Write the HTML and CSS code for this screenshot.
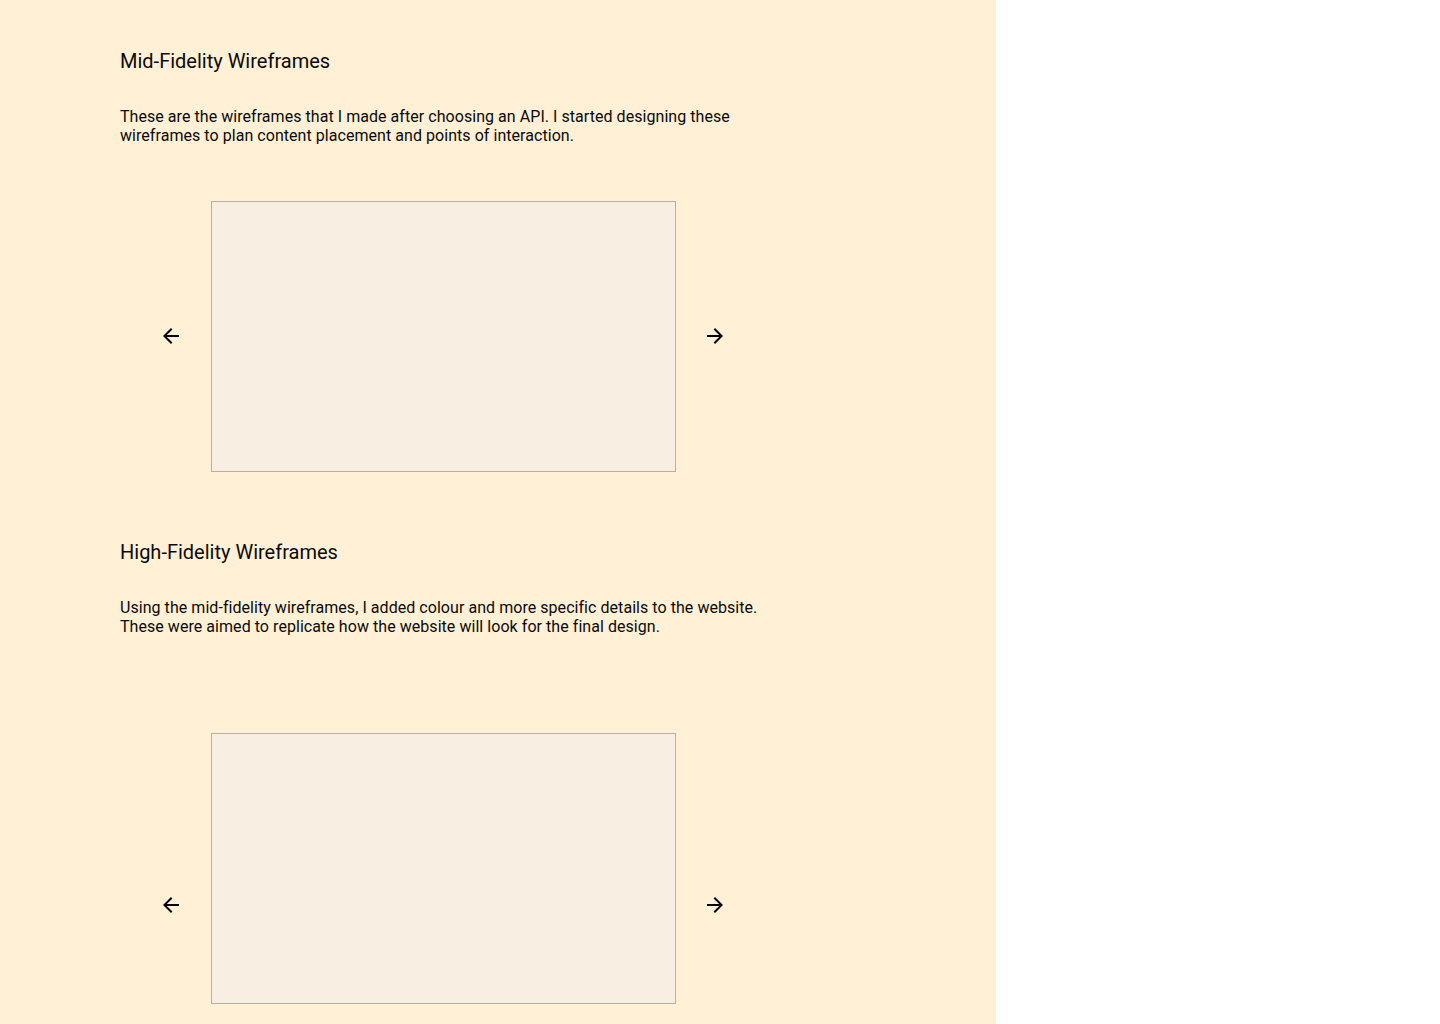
FILE: index.html
```html
<!DOCTYPE html>
<html lang="en">
<head>
<meta charset="utf-8">
<title>Wireframes</title>
<link rel="stylesheet" href="styles.css">
</head>
<body>
<main class="panel">
  <section class="section">
    <h2 class="title">Mid-Fidelity Wireframes</h2>
    <p class="text">These are the wireframes that I made after choosing an API. I started designing these<br>wireframes to plan content placement and points of interaction.</p>
    <div class="carousel carousel-mid">
      <button class="arrow" aria-label="Previous"><svg viewBox="0 0 24 24" width="24" height="24"><path d="M20 11H7.83l5.59-5.59L12 4l-8 8 8 8 1.41-1.41L7.83 13H20v-2z"/></svg></button>
      <div class="frame"></div>
      <button class="arrow" aria-label="Next"><svg viewBox="0 0 24 24" width="24" height="24"><path d="M4 11h12.17l-5.59-5.59L12 4l8 8-8 8-1.41-1.41L16.17 13H4v-2z"/></svg></button>
    </div>
  </section>
  <section class="section section-high">
    <h2 class="title">High-Fidelity Wireframes</h2>
    <p class="text">Using the mid-fidelity wireframes, I added colour and more specific details to the website.<br>These were aimed to replicate how the website will look for the final design.</p>
    <div class="carousel carousel-high">
      <button class="arrow" aria-label="Previous"><svg viewBox="0 0 24 24" width="24" height="24"><path d="M20 11H7.83l5.59-5.59L12 4l-8 8 8 8 1.41-1.41L7.83 13H20v-2z"/></svg></button>
      <div class="frame"></div>
      <button class="arrow" aria-label="Next"><svg viewBox="0 0 24 24" width="24" height="24"><path d="M4 11h12.17l-5.59-5.59L12 4l8 8-8 8-1.41-1.41L16.17 13H4v-2z"/></svg></button>
    </div>
  </section>
</main>
</body>
</html>
```
FILE: styles.css
```css
* { box-sizing: border-box; }
html, body { margin: 0; padding: 0; background: #ffffff; }
body { font-family: Roboto, "Liberation Sans", sans-serif; color: #0a0a0a; }
.panel {
  width: 996px;
  min-height: 1024px;
  background: #fff0d6;
  padding: 49px 0 0 120px;
}
.section { display: flex; flex-direction: column; }
.section-high { margin-top: 68px; }
.title {
  margin: 0;
  font-size: 20px;
  line-height: 24px;
  font-weight: 400;
}
.text {
  margin: 34px 0 0;
  font-size: 16px;
  line-height: 19px;
  letter-spacing: 0.05px;
}
.carousel {
  display: flex;
  align-items: center;
  margin-top: 56px;
  padding-left: 39px;
}
.carousel-mid .arrow { margin-bottom: 2px; }
.carousel-high { margin-top: 97px; }
.carousel-high .arrow { margin-top: 73px; }
.arrow {
  width: 24px;
  height: 24px;
  padding: 0;
  border: 0;
  background: transparent;
  display: flex;
  align-items: center;
  justify-content: center;
  cursor: pointer;
}
.arrow svg { fill: #000000; display: block; }
.arrow:first-child { margin-right: 28px; }
.arrow:last-child { margin-left: 27px; }
.frame {
  width: 465px;
  height: 271px;
  background: #f8efe2;
  border: 1px solid #b7b0a6;
}
```
